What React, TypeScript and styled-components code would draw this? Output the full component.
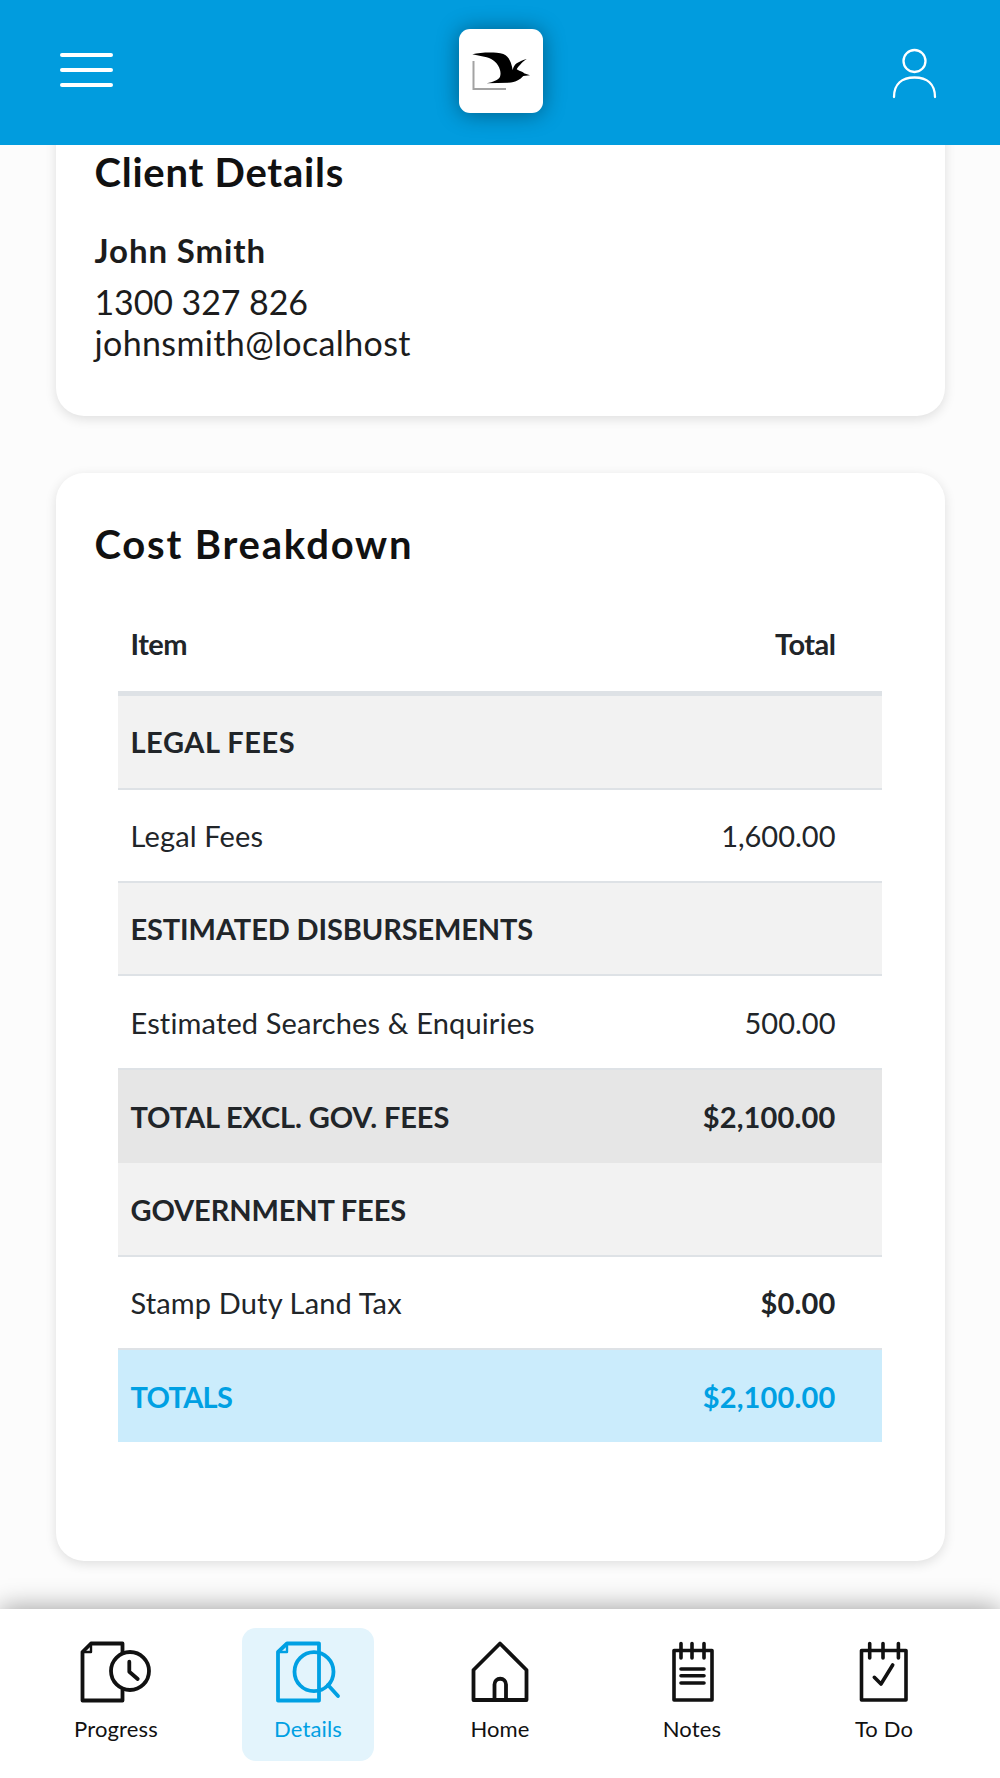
import styled, { createGlobalStyle } from 'styled-components';

const costRows = [
	{ kind: 'group', item: 'LEGAL FEES', total: '', tracking: 0.55 },
	{ kind: 'line', item: 'Legal Fees', total: '1,600.00' },
	{ kind: 'group', item: 'ESTIMATED DISBURSEMENTS', total: '' },
	{ kind: 'line', item: 'Estimated Searches & Enquiries', total: '500.00' },
	{ kind: 'subtotal', item: 'TOTAL EXCL. GOV. FEES', total: '$2,100.00' },
	{ kind: 'group', item: 'GOVERNMENT FEES', total: '' },
	{ kind: 'line', item: 'Stamp Duty Land Tax', total: '$0.00', strongTotal: true },
	{ kind: 'grand', item: 'TOTALS', total: '$2,100.00', tracking: -0.7 },
];

const navItems = [
	{ label: 'Progress', icon: <ProgressIcon /> },
	{ label: 'Details', icon: <DetailsIcon />, active: true },
	{ label: 'Home', icon: <HomeIcon /> },
	{ label: 'Notes', icon: <NotesIcon /> },
	{ label: 'To Do', icon: <TodoIcon /> },
];

export default function App() {
	return (
		<>
			<GlobalStyle />
			<Page>
				<Header>
					<MenuButton aria-label="Menu">
						<MenuBar />
						<MenuBar />
						<MenuBar />
					</MenuButton>
					<Logo>
						<LogoMark />
					</Logo>
					<Profile>
						<ProfileIcon />
					</Profile>
				</Header>

				<Main>
					<ClientCard>
						<CardTitle $tracking={0.75}>Client Details</CardTitle>
						<ClientName>John Smith</ClientName>
						<ClientPhone>1300 327 826</ClientPhone>
						<ClientEmail>johnsmith@localhost</ClientEmail>
					</ClientCard>

					<CostCard>
						<CardTitle $tracking={1.8}>Cost Breakdown</CardTitle>
						<CostTable>
							<thead>
								<tr>
									<HeadCell>Item</HeadCell>
									<HeadCell $right>Total</HeadCell>
								</tr>
							</thead>
							<tbody>
								{costRows.map((row) => (
									<CostRow key={row.item} $kind={row.kind}>
										<ItemCell $kind={row.kind} $tracking={row.tracking}>
											{row.item}
										</ItemCell>
										<TotalCell $kind={row.kind} $strong={row.strongTotal}>
											{row.total}
										</TotalCell>
									</CostRow>
								))}
							</tbody>
						</CostTable>
					</CostCard>
				</Main>

				<BottomNav>
					{navItems.map((item) => (
						<NavItem key={item.label} $active={item.active}>
							<NavIcon>{item.icon}</NavIcon>
							<NavLabel>{item.label}</NavLabel>
						</NavItem>
					))}
				</BottomNav>
			</Page>
		</>
	);
}

function LogoMark() {
	return (
		<svg width="84" height="84" viewBox="0 0 84 84">
			<path d="M14.5 32V60H47" fill="none" stroke="#a3a3a3" strokeWidth="2" />
			<path
				d="M13.3 25.3C20 23.5 30 23.2 37.7 23.7C43 24.2 46.5 25.5 48.3 27.7C51 30.5 52.7 35 53.7 41C54.5 37.5 56 35.5 57.7 34.3C61 32.5 64 31 67.7 30C64.5 32 62.5 34 61 36C59.5 37.5 58.3 39 57.7 40.3C59 41 60 41.5 61 42C63 42.5 64.3 43.3 65 44.3L71 46.3L64.3 47C62.5 49 61 50.2 59.3 51C56 52.8 53 53.5 49.3 53.7L27.7 54.3C31 53.5 34 52.8 36 51.7C38.5 50.7 40.3 49.3 41 47.7C41.8 45.5 41.6 43 41 41C40 37.5 38.5 35 36 32.7C33.5 30.5 31 29.2 27.7 28.3C23 27.2 18 26.5 13.3 25.3Z"
				fill="#000"
			/>
		</svg>
	);
}

function ProfileIcon() {
	return (
		<svg width="52" height="52" viewBox="0 0 52 52" fill="none" stroke="#fff" strokeWidth="2.3">
			<circle cx="24.5" cy="14" r="11" />
			<path d="M4 50C4 37 12 30.5 24.5 30.5C37 30.5 45 37 45 50" strokeLinecap="round" />
		</svg>
	);
}

function ProgressIcon() {
	return (
		<svg width="72" height="64" viewBox="0 0 72 64" fill="none" stroke="currentColor" strokeWidth="3.8" strokeLinejoin="round" strokeLinecap="round">
			<path d="M42.5 13V3.5H11L2.5 12V60.5H42.5V50" />
			<path d="M11 3.5V12H2.5" strokeWidth="2.4" />
			<circle cx="50" cy="31" r="19" />
			<path d="M49.3 21.7V31.7L57.7 39" />
		</svg>
	);
}

function DetailsIcon() {
	return (
		<svg width="66" height="64" viewBox="0 0 66 64" fill="none" stroke="currentColor" strokeWidth="3.8" strokeLinejoin="round" strokeLinecap="round">
			<path d="M44 60.5V3.5H12L3 12V60.5Z" />
			<path d="M12 3.5V12H3" strokeWidth="2.4" />
			<circle cx="39" cy="31.7" r="19.5" />
			<path d="M53 45L63 56" />
		</svg>
	);
}

function HomeIcon() {
	return (
		<svg width="60" height="64" viewBox="0 0 60 64" fill="none" stroke="currentColor" strokeWidth="3.8" strokeLinejoin="round" strokeLinecap="round">
			<path d="M30 3.5L3.5 30V60H56.5V30Z" />
			<path d="M24.5 60V44.5A5.7 5.7 0 0 1 36 44.5V60" />
		</svg>
	);
}

function NotesIcon() {
	return (
		<svg width="48" height="64" viewBox="0 0 48 64" fill="none" stroke="currentColor" strokeWidth="3.6" strokeLinejoin="round" strokeLinecap="round">
			<rect x="6" y="10.5" width="38" height="49.5" />
			<path d="M13 3.5V18M24 3.5V18M36 3.5V18" />
			<path d="M13 29H36M13 35.8H36M13 43H36" />
		</svg>
	);
}

function TodoIcon() {
	return (
		<svg width="56" height="64" viewBox="0 0 56 64" fill="none" stroke="currentColor" strokeWidth="3.6" strokeLinejoin="round" strokeLinecap="round">
			<rect x="5.5" y="10.5" width="44.5" height="49.5" />
			<path d="M13.7 3.5V18M27 3.5V18M42.4 3.5V18" />
			<path d="M18.3 37.3L25 44L36.7 25" />
		</svg>
	);
}

const GlobalStyle = createGlobalStyle`
	html, body {
		margin: 0;
		padding: 0;
	}
	body {
		background: #fcfcfc;
		font-family: Lato, "Noto Sans", sans-serif;
		color: #212529;
	}
`;

const Page = styled.div`
	display: flex;
	flex-direction: column;
	height: 1778px;
	overflow: hidden;
`;

const Header = styled.header`
	display: grid;
	grid-template-columns: 1fr auto 1fr;
	flex-shrink: 0;
	height: 145px;
	padding: 0 58px 0 60px;
	box-sizing: border-box;
	background: #019cde;
	position: relative;
	z-index: 2;
`;

const MenuButton = styled.div`
	display: flex;
	flex-direction: column;
	gap: 11px;
	width: 53px;
	margin-top: 53px;
`;

const MenuBar = styled.span`
	height: 4px;
	border-radius: 2px;
	background: #fff;
`;

const Logo = styled.div`
	width: 84px;
	height: 84px;
	margin-top: 29px;
	border-radius: 11px;
	background: #fff;
	box-shadow: 0 1px 22px rgba(0, 0, 0, 0.4);
`;

const Profile = styled.div`
	justify-self: end;
	margin-top: 47px;
	line-height: 0;
`;

const Main = styled.main`
	flex: 1;
	min-height: 0;
	overflow: hidden;
	padding: 0 55.5px;
`;

const Card = styled.section`
	background: #fff;
	border-radius: 28px;
	padding: 47px 39px 0;
	box-shadow: 0 3px 12px rgba(0, 0, 0, 0.12);
`;

const ClientCard = styled(Card)`
	margin-top: -44px;
	height: 315px;
	box-sizing: border-box;
`;

const CostCard = styled(Card)`
	margin-top: 57px;
	padding-bottom: 119px;
`;

const CardTitle = styled.h2<{ $tracking: number }>`
	margin: 0;
	font-size: 40px;
	line-height: 48px;
	font-weight: 700;
	letter-spacing: ${({ $tracking }) => $tracking}px;
	color: #111;
`;

const ClientName = styled.div`
	margin-top: 34px;
	font-size: 33px;
	line-height: 40px;
	font-weight: 700;
	letter-spacing: 0.9px;
	color: #1c1c1c;
`;

const ClientPhone = styled.div`
	margin-top: 12px;
	font-size: 34px;
	line-height: 40px;
	letter-spacing: -0.1px;
	color: #1c1c1c;
`;

const ClientEmail = styled.div`
	margin-top: 1px;
	font-size: 34px;
	line-height: 40px;
	letter-spacing: 0.36px;
	color: #1c1c1c;
`;

const CostTable = styled.table`
	width: 764px;
	margin: 29px 0 0 23px;
	border-collapse: collapse;
	table-layout: fixed;
`;

const HeadCell = styled.th<{ $right?: boolean }>`
	height: 96px;
	padding: 0 ${({ $right }) => ($right ? '46px' : '13px')} 0 13px;
	border-bottom: 5px solid #dee2e6;
	box-sizing: border-box;
	font-size: 29px;
	font-weight: 700;
	letter-spacing: -0.5px;
	text-align: ${({ $right }) => ($right ? 'right' : 'left')};
	color: #212529;
`;

const rowBackgrounds: Record<string, string> = {
	group: '#f2f2f2',
	line: '#fff',
	subtotal: '#e6e6e6',
	grand: '#cbecfc',
};

const CostRow = styled.tr<{ $kind: string }>`
	height: ${({ $kind }) => ($kind === 'subtotal' ? '94px' : '93px')};
	background: ${({ $kind }) => rowBackgrounds[$kind]};
	border-bottom: ${({ $kind }) => ($kind === 'group' || $kind === 'line' ? '2px solid #dee2e6' : 'none')};
	color: ${({ $kind }) => ($kind === 'grand' ? '#00a0e3' : '#212529')};

	&:first-child {
		height: 96px;
	}

	&:nth-child(4) {
		height: 94px;
	}
`;

const ItemCell = styled.td<{ $kind: string; $tracking?: number }>`
	padding: 0 0 0 13px;
	width: 70%;
	font-size: 29px;
	font-weight: ${({ $kind }) => ($kind === 'line' ? 400 : 700)};
	letter-spacing: ${({ $kind, $tracking }) => $tracking ?? ($kind === 'line' ? 0.15 : -0.12)}px;
	white-space: nowrap;
`;

const TotalCell = styled.td<{ $kind: string; $strong?: boolean }>`
	padding: 0 46px 0 0;
	font-size: 29px;
	font-weight: ${({ $kind, $strong }) => ($kind !== 'line' || $strong ? 700 : 400)};
	letter-spacing: ${({ $kind, $strong }) => ($kind !== 'line' || $strong ? '0.15px' : '0')};
	text-align: right;
	white-space: nowrap;
`;

const BottomNav = styled.nav`
	display: grid;
	grid-template-columns: repeat(5, 192px);
	flex-shrink: 0;
	height: 169px;
	padding: 19px 20px 0;
	box-sizing: border-box;
	background: #fff;
	box-shadow: 0 -2px 24px rgba(0, 0, 0, 0.35);
	position: relative;
	z-index: 1;
`;

const NavItem = styled.div<{ $active?: boolean }>`
	display: flex;
	flex-direction: column;
	align-items: center;
	justify-self: center;
	width: 132px;
	height: 133px;
	padding-top: 12px;
	box-sizing: border-box;
	border-radius: 14px;
	background: ${({ $active }) => ($active ? '#e3f4fc' : 'transparent')};
	color: ${({ $active }) => ($active ? '#00a0e3' : '#111')};
`;

const NavIcon = styled.div`
	height: 64px;
	line-height: 0;
`;

const NavLabel = styled.span`
	margin-top: 11px;
	font-size: 22px;
	line-height: 28px;
	letter-spacing: 0.15px;
`;
